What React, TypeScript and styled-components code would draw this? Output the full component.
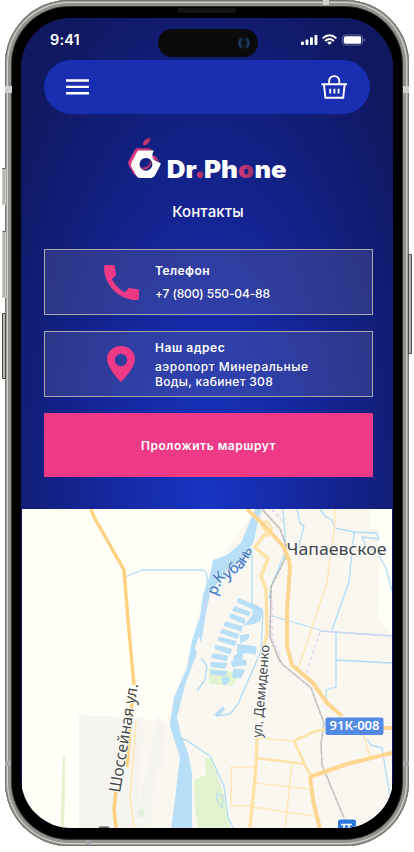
import React from "react";
import styled, { createGlobalStyle } from "styled-components";

const GlobalStyle = createGlobalStyle`
  html, body { margin: 0; padding: 0; background: #fff; overflow: hidden; }
  * { box-sizing: border-box; }
`;

const Stage = styled.main`
  position: relative;
  width: 414px;
  height: 852px;
  padding: 0 5px;
  background: #fff;
  font-family: "Inter", "Noto Sans", sans-serif;
  color: #fff;
`;

const SideKey = styled.span<{ $side: "left" | "right"; $top: number; $height: number; $dark?: boolean }>`
  position: absolute;
  ${(p) => (p.$side === "left" ? "left: 2px;" : "right: 2px;")}
  top: ${(p) => p.$top}px;
  width: 4px;
  height: ${(p) => p.$height}px;
  border-radius: 1px;
  background: #b5b6b0;
  border: 1px solid ${(p) => (p.$dark ? "#4a4a46" : "#c9cac5")};
  border-top-color: #555550;
`;

const Antenna = styled.span<{ $x: number; $y: number; $w: number; $h: number; $tone?: string }>`
  position: absolute;
  left: ${(p) => p.$x}px;
  top: ${(p) => p.$y}px;
  width: ${(p) => p.$w}px;
  height: ${(p) => p.$h}px;
  background: ${(p) => p.$tone ?? "#d0d0ce"};
`;

const Body = styled.div`
  width: 404px;
  height: 846px;
  padding: 18px 16px;
  border-radius: 64px;
  background: #000;
  box-shadow:
    inset 0 0 0 1px #74746e,
    inset 0 0 0 2px #a3a39d,
    inset 0 0 0 3px #d3d3cd,
    inset 0 0 0 6px #92938d,
    inset 0 0 0 7px #33332f;
`;

const Speaker = styled.span`
  position: absolute;
  left: 177px;
  top: 8px;
  width: 59px;
  height: 5px;
  border-radius: 3px;
  background: #141414;
`;

const Screen = styled.div`
  width: 372px;
  height: 810px;
  border-radius: 50px;
  overflow: hidden;
  display: flex;
  flex-direction: column;
  background: #10186a;
`;

const Hero = styled.section`
  height: 491px;
  flex: none;
  display: flex;
  flex-direction: column;
  background: radial-gradient(ellipse 245px 580px at 50% 100%, #1834c2 0%, #1529a2 36%, #122080 68%, #101860 100%);
`;

const StatusBar = styled.div`
  position: relative;
  height: 42px;
  padding: 2px 28px 0 29px;
  display: flex;
  align-items: center;
  justify-content: space-between;
`;

const Clock = styled.span`
  font-size: 14.5px;
  font-weight: 600;
  line-height: 18px;
  letter-spacing: 0.15px;
`;

const Island = styled.span`
  position: absolute;
  left: 137px;
  top: 11px;
  width: 100px;
  height: 28px;
  border-radius: 14px;
  background: #0a0a0b;
`;

const NavBar = styled.nav`
  width: 326px;
  height: 54px;
  margin-left: 23px;
  padding: 0 22px;
  border-radius: 27px;
  background: #192eb0;
  display: flex;
  align-items: center;
  justify-content: space-between;
`;

const IconButton = styled.button`
  padding: 0;
  border: 0;
  background: none;
  color: #fff;
  display: flex;
`;

const Brand = styled.svg`
  display: block;
  flex: none;
  width: 168px;
  height: 52px;
  margin: 23px 0 0 106px;
`;

const Title = styled.h1`
  margin: 12px 0 0 2px;
  height: 22px;
  flex: none;
  text-align: center;
  font: 500 15px/22px "Inter", sans-serif;
  letter-spacing: 0.14px;
`;

const Contacts = styled.div`
  width: 329px;
  margin: 26px 0 0 23px;
  display: grid;
  gap: 16px;
`;

const Card = styled.article`
  height: 66px;
  border: 1px solid #aaa9aa;
  background: rgba(126, 126, 175, 0.25);
  display: grid;
  grid-template-columns: 110px 1fr;
`;

const CardIcon = styled.div<{ $inset: number }>`
  padding-left: ${(p) => p.$inset}px;
  display: flex;
  align-items: center;
  justify-content: flex-start;
`;

const CardText = styled.div`
  font-size: 12px;
  line-height: 15px;
  font-weight: 500;
`;

const CardTitle = styled.h2<{ $top: number; $gap: number; $track: number }>`
  margin: ${(p) => p.$top}px 0 ${(p) => p.$gap}px;
  font-size: 12px;
  font-weight: 600;
  line-height: 15px;
  letter-spacing: ${(p) => p.$track}px;
`;

const Line = styled.span<{ $track: number }>`
  display: block;
  white-space: nowrap;
  letter-spacing: ${(p) => p.$track}px;
`;

const RouteButton = styled.button`
  height: 64px;
  border: 0;
  padding: 1px 0 0;
  background: #ee3a86;
  color: #fff;
  font: 600 12px/16px "Inter", sans-serif;
  letter-spacing: 0.52px;
`;

const MapView = styled.svg`
  display: block;
  flex: none;
  width: 370px;
  height: 319px;
  margin-left: 1px;
`;

function StatusIcons() {
  return (
    <svg width="66" height="14" viewBox="0 0 66 14" fill="#fff">
      <rect x="2" y="8.5" width="2.9" height="3.5" rx="0.8" />
      <rect x="6.5" y="6.6" width="2.9" height="5.4" rx="0.8" />
      <rect x="11" y="4.2" width="2.9" height="7.8" rx="0.8" />
      <rect x="15.5" y="2" width="2.9" height="10" rx="0.8" />
      <g fill="none" stroke="#fff" strokeWidth="2">
        <path d="M23.7 5.3Q30.5 -.7 37.3 5.3" />
        <path d="M26.1 8Q30.5 4.1 34.9 8" />
      </g>
      <path d="M28.1 9.5Q30.5 7.7 32.9 9.5L30.5 12Z" />
      <rect x="43.5" y="2" width="20" height="10" rx="3" fill="none" stroke="#fff" strokeOpacity=".35" />
      <rect x="44.8" y="3.2" width="17.4" height="7.6" rx="1.8" />
      <path d="M64.7 5.4q1.2.5 1.2 1.6t-1.2 1.6z" opacity=".5" />
    </svg>
  );
}

function Camera() {
  return (
    <svg width="100" height="28" viewBox="0 0 100 28">
      <circle cx="86" cy="14" r="6.5" fill="#0b111a" />
      <path d="M83.500 9.5q-4 4.5 0 9M88.500 9.5q4 4.5 0 9" fill="none" stroke="#1c3556" strokeWidth="2.8" />
    </svg>
  );
}

function BasketIcon() {
  return (
    <svg width="27" height="24" viewBox="0 0 27 24" fill="none" stroke="#fff" strokeWidth="1.9">
      <path d="M0.5 9.2h25.5M2.9 9.2l1.5 13.5h17.8l1.5-13.5" />
      <path d="M8.1 9V6.7C8.1 3 10.3 1.1 13.2 1.1s5.1 1.9 5.1 5.6V9" strokeWidth="1.8" />
      <path d="M9.2 13.7v4.8M13.4 13.7v4.8M17.6 13.7v4.8" />
    </svg>
  );
}

function Logo() {
  return (
    <Brand viewBox="127 137 168 52">
      <defs>
        <linearGradient id="rose" x1="0" y1="0" x2="1" y2=".5">
          <stop offset="0.1" stopColor="#ef3c87" />
          <stop offset="1" stopColor="#8e2e6e" />
        </linearGradient>
        <linearGradient id="shade" x1="0" y1="0" x2="1" y2="0">
          <stop offset="0" stopColor="#dd3a80" />
          <stop offset="1" stopColor="#96305f" />
        </linearGradient>
      </defs>
      <path d="M137.500 148.200H149Q151.500 148.200 152 151L150 152H138.500L131 164L136.500 176L133.500 174L128.400 164.500Q127.800 162.800 128.600 161.200L135.300 149.500Q136.200 148.200 137.500 148.200Z" fill="url(#rose)" />
      <path d="M152 155.500Q155.500 155.500 157.500 158.500L159.500 162Q153.500 161.500 152 155.500Z" fill="url(#rose)" />
      <path d="M143.200 145.300C142.700 141.300 145.700 138.200 150.300 137.800C150.600 142 147.800 145.200 143.200 145.300Z" fill="url(#shade)" />
      <path
        fillRule="evenodd"
        fill="#fff"
        d="M139.300 150.500H154C151.200 154.500 151.900 160.200 157.600 161.800L160.300 163Q161 163.700 160.500 164.800L154.800 175.800Q153.600 177.900 151.200 177.900H140.200Q137.600 177.900 136.300 175.700L131.200 166.500Q130.300 164.700 131.300 162.900L136.800 152.200Q137.800 150.500 139.300 150.500ZM145.900 157.900a6.400 6.400 0 1 0 .1 0z"
      />
      <path d="M150.600 159.800A6.500 6.500 0 0 1 140.400 167.500C146 168.300 149.900 165.300 150.600 159.800Z" fill="url(#shade)" />
      <g fontFamily="Inter, sans-serif" fontWeight="900" fontSize="24" fill="#fff">
        <text x="166.700" y="177.800" textLength="30" lengthAdjust="spacingAndGlyphs">Dr</text>
        <circle cx="200.300" cy="174.800" r="3.200" fill="url(#shade)" />
        <text x="204" y="177.800" textLength="34" lengthAdjust="spacingAndGlyphs">Ph</text>
        <text x="238" y="177.800" textLength="16" lengthAdjust="spacingAndGlyphs" fill="url(#shade)">o</text>
        <text x="254.500" y="177.800" textLength="32" lengthAdjust="spacingAndGlyphs">ne</text>
      </g>
    </Brand>
  );
}

function PhoneIcon() {
  return (
    <svg width="35" height="35" viewBox="3 3 18 18" preserveAspectRatio="none" fill="#ee3a86">
      <path d="M20.010 15.380c-1.230 0-2.420-.2-3.530-.560-.35-.12-.74-.03-1.010.24l-1.570 1.970c-2.830-1.350-5.480-3.900-6.890-6.830l1.950-1.660c.27-.28.35-.67.24-1.020-.37-1.110-.56-2.300-.56-3.530C8.640 3.450 8.190 3 7.650 3H4.190C3.650 3 3 3.240 3 3.990 3 13.280 10.730 21 20.010 21c.71 0 .99-.63.99-1.180v-3.450c0-.54-.45-.99-.99-.99z" />
    </svg>
  );
}

function PinIcon() {
  return (
    <svg width="28" height="36" viewBox="5 2 14 20" preserveAspectRatio="none" fill="#ee3a86">
      <path fillRule="evenodd" d="M12 2C7.900 2 5 5.400 5 9.200C5 14.300 12 22 12 22s7-7.700 7-12.800C19 5.400 16.100 2 12 2zm0 4.400c1.700 0 3.100 1.500 3.100 3.400s-1.400 3.400-3.100 3.400-3.100-1.500-3.100-3.400S10.300 6.400 12 6.400z" />
    </svg>
  );
}

function CityMap() {
  return (
    <MapView viewBox="22 509 370 319" fill="none" strokeLinejoin="round">
      <rect x="22" y="509" width="370" height="319" fill="#fffff7" />

      {/* built-up land and parks */}
      <g stroke="none">
        <path d="M256 509h114v20h10l-2 90 14 15v194H79V715l88 6 20-60 14-60 10-30z" fill="#faf7f1" />
        <path d="M79 715l65 3-8 110H79zM157 716l9 10-4 40-7 8-4 54h-18l14-60z" fill="#f4f2ee" opacity=".6" />
        <path d="M63 756h2v34l-1 38h-3v-22z" fill="#e2f2cf" />
        <path d="M205 757l8 2 5 18 7 22 5 29h-32l-3-20-1-28 12-5z" fill="#e2f3d0" />
        <path d="M209 668l30 5-6 13-24-2z" fill="#e2f3d0" />
        <path d="M139 809h5v8h-5z" fill="#e3eedb" />
      </g>

      {/* river and ponds */}
      <g fill="#b7dff8" stroke="none">
        <path d="M255 509h7l-4 12-4 20-10 18-14 8-13 17-7 10-5 24-3 21-6 17-10 26-9 35 4 18 7 18 4 20 0 56h-21l4-30 5-42-7-21-3-10 4-29 13-29 5-27 8-24 3-22 7-20 3-15 14-5 14-12z" />
        <g transform="translate(200 480) scale(.3333)">
          <path d="M116 354l48 20-4 15-50-22zM102 378l49 17-4 14-50-17zM92 400l45 17-4 16-45-20zM76 424l53 15-4 16-54-18zM65 447l52 14-3 16-54-18zM57 470l52 13-4 16-53-17zM46 494l50 12-5 18-48-18zM38 520l47 7-5 17-47-11z" />
          <path d="M158 369l32 19-9 35-17 8-33 6 26-31zM120 466l29-5-3 15-26 14zM111 491l59 8-3 25-27-5-29 8zM103 526l28-7-5 20-28 5z" />
          <path d="M31 545l51 3-6 18-44-4zM30 570l52 3-5 16-46-6zM92 545l45-7 4 18-44 5zM100 565l35 4-13 27-26-3zM65 595l20-5 5 10-12 15-10-2zM41 706l28-28 6 8-16 22z" />
        </g>
      </g>
      <path d="M195 648l4-12 2 8-4 10z" fill="#faf9f4" />
      <g stroke="#b0dcf4" strokeWidth="1.3">
        <path d="M125 577l17-7h60q5 0 5 8v15M201 658l6 8-2 14-8 11M178 738l8 2 24 16 14 30 4 31 5 11" />
        <path d="M252 548v57l11 8-2 38-23 53-8 10-14 2" />
        <path d="M297 509l3 14 4 3-5 20-1 7M320 509l5 7 7 4 3 8 19 4 22 1 3 6-17-2 5 11 10 4 9 16 6 23M354 532l-5 50-17 48M272 616l48 14M320 631l72 5M336 632v55l-10 3v14M336 660l56 3M283 509l3 41-15 37-2 12M367 739l4 6 11 3 8 48" />
        <path d="M217 793l6 3-1 12-5-8z" strokeWidth="1" />
      </g>

      {/* rail lines and boundaries */}
      <g>
        <path d="M262 509l18 20 6 16-1 14-14 28-1 50 10 25" stroke="#b3afac" strokeWidth="1.5" />
        <path d="M262 509l18 20 6 16-1 14-14 28-1 50 10 25" stroke="#ece9e6" strokeWidth=".6" strokeDasharray="3 2" />
        <path d="M276 652l6 12 29 24 13 35-3 20 1 22 22 53" stroke="#b8b5b2" strokeWidth="1.5" />
        <path d="M276 652l6 12 29 24 13 35-3 20 1 22 22 53" stroke="#e8e6e3" strokeWidth=".6" strokeDasharray="4 2" />
      </g>
      <path d="M272 509l10 12M272 600v37l9 20M320 632l-8 24-7 22M320 631l72 5M206 603l-3 14" stroke="#dfcdf4" strokeWidth="1.2" strokeDasharray="4 2.5" />

      {/* minor roads */}
      <g stroke="#ffe8b8" strokeWidth="1.6">
        <path d="M335 509l-1 23-7 50-25 75-5 14" />
        <path d="M136 722l-2 30-4 44 4 32M256 738l38 3M252 807l62 9M255 783l54 6M231 767h24M231 767v39h21M292 764l-7 64M363 734l7 23" />
      </g>
      <g stroke="#ffe2a6" strokeWidth="2.6">
        <path d="M257 758l47 6M294 741l19-9 12-3M294 741l12 26 5 9" />
        <path d="M257 738l-1 29-6 61" strokeWidth="3.4" />
      </g>

      {/* main roads */}
      <g stroke="#ffe2a6" strokeWidth="3.4">
        <path d="M267 532l-12 15 13 12-7 17 5 13 1 45-3 12" />
        <path d="M261 524l6-3 5 7-4 8z" strokeWidth="2" />
      </g>
      <g stroke="#fed68f" strokeWidth="4">
        <path d="M247 509l18 17 18 20 6 14 1 8-3 42v36l5 19 21 18 14 20 15 13" />
        <path d="M310 777l37-13 45-11M310 776l3 24 7 29" />
        <path d="M383 728h9" />
        <path d="M91 509l3 8 30 53 4 50 6 65M133 690l-6 77M116 790l-2 20 2 18" strokeWidth="3.4" stroke="#ffd07f" />
      </g>

      {/* labels */}
      <g fontFamily="Noto Sans, sans-serif" fill="#44474b" stroke="#fffffb" strokeWidth="2" paintOrder="stroke">
        <text x="286.500" y="555" fontSize="17" textLength="100" lengthAdjust="spacingAndGlyphs" fill="#404347">Чапаевское</text>
        <text transform="translate(120 793) rotate(-80.500)" fontSize="16" textLength="110" lengthAdjust="spacingAndGlyphs">Шоссейная ул.</text>
        <text transform="translate(261.500 738) rotate(-85)" fontSize="13.500" textLength="93" lengthAdjust="spacingAndGlyphs">ул. Демиденко</text>
        <text transform="translate(109 835.500) rotate(-90)" fontSize="14">П</text>
        <g fill="#4674bd" stroke="#d6ebfb" strokeWidth="1.3" fontSize="15">
          <text transform="translate(216 596) rotate(-68)">р.</text>
          <text transform="translate(219 584) rotate(-43)">К</text>
          <text transform="translate(227 580) rotate(-32)">у</text>
          <text transform="translate(233 575) rotate(-37)">б</text>
          <text transform="translate(240 570) rotate(-44)">а</text>
          <text transform="translate(245 564) rotate(-58)">н</text>
          <text transform="translate(249 557) rotate(-67)">ь</text>
        </g>
      </g>
      <rect x="325.500" y="717.500" width="58" height="17.500" rx="2" fill="#528ae5" />
      <text x="329.500" y="730.300" fontFamily="Noto Sans, sans-serif" fontWeight="600" fontSize="13" textLength="50" lengthAdjust="spacingAndGlyphs" fill="#fff">91К-008</text>
      <rect x="338" y="819.500" width="18" height="12" rx="2.5" fill="#2f76df" />
      <path d="M341 824.500h11M344 825v4M349 825v4" stroke="#fff" strokeWidth="1.7" />
    </MapView>
  );
}

export default function App() {
  return (
    <Stage>
      <GlobalStyle />
      <SideKey $side="left" $top={168} $height={37} />
      <SideKey $side="left" $top={231} $height={67} />
      <SideKey $side="left" $top={313} $height={66} $dark />
      <SideKey $side="right" $top={254} $height={100} $dark />
      <Body>
        <Screen>
          <Hero>
            <StatusBar>
              <Clock>9:41</Clock>
              <Island><Camera /></Island>
              <StatusIcons />
            </StatusBar>
            <NavBar>
              <IconButton aria-label="Меню">
                <svg width="23" height="16" viewBox="0 0 23 16" fill="#fff">
                  <path d="M0 0.3h23v2.4H0zM0 6.7h23v2.4H0zM0 13h23v2.4H0z" />
                </svg>
              </IconButton>
              <IconButton aria-label="Корзина"><BasketIcon /></IconButton>
            </NavBar>
            <Logo />
            <Title>Контакты</Title>
            <Contacts>
              <Card>
                <CardIcon $inset={59}><PhoneIcon /></CardIcon>
                <CardText>
                  <CardTitle $top={13} $gap={8} $track={0.45}>Телефон</CardTitle>
                  <Line $track={-0.13}>+7 (800) 550-04-88</Line>
                </CardText>
              </Card>
              <Card>
                <CardIcon $inset={62}><PinIcon /></CardIcon>
                <CardText>
                  <CardTitle $top={8} $gap={4} $track={0.55}>Наш адрес</CardTitle>
                  <Line $track={0.52}>аэропорт Минеральные</Line>
                  <Line $track={0.32}>Воды, кабинет 308</Line>
                </CardText>
              </Card>
              <RouteButton>Проложить маршрут</RouteButton>
            </Contacts>
          </Hero>
          <CityMap />
        </Screen>
      </Body>
      <Speaker />
      <Antenna $x={5} $y={86} $w={7} $h={7} />
      <Antenna $x={403} $y={86} $w={6} $h={7} />
      <Antenna $x={323} $y={0} $w={6} $h={5} />
      <Antenna $x={5} $y={761} $w={6} $h={5} $tone="#a0a6aa" />
      <Antenna $x={403} $y={761} $w={6} $h={5} $tone="#a0a6aa" />
      <Antenna $x={86} $y={840} $w={5} $h={5} $tone="#a0a6aa" />
    </Stage>
  );
}
